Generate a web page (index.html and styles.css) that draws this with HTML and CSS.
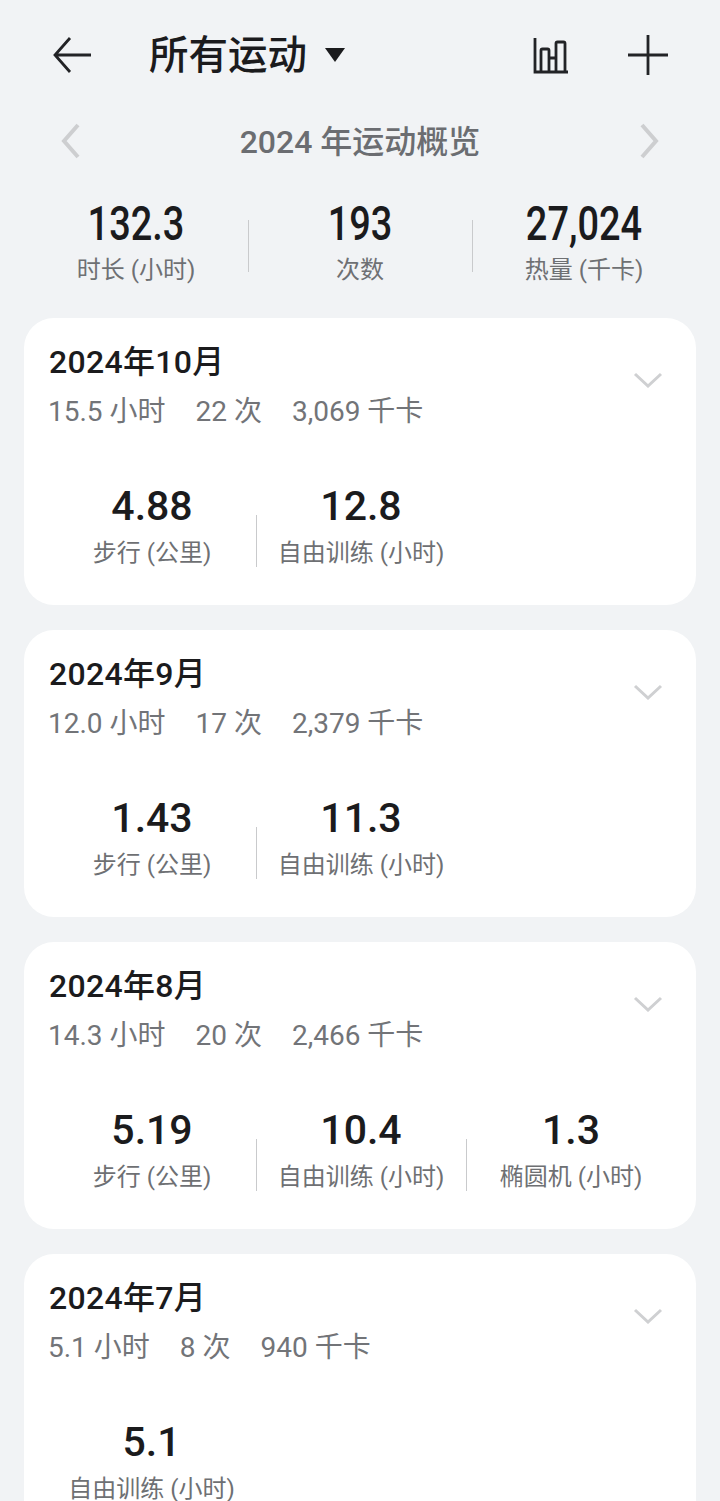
FILE: index.html
```html
<!DOCTYPE html>
<html lang="zh-CN">
<head>
<meta charset="utf-8">
<title>所有运动</title>
<link rel="stylesheet" href="styles.css">
</head>
<body>
<header class="topbar">
  <svg class="icon back" width="42" height="38" viewBox="0 0 42 38"><path d="M39 19H3M18 2 3 19l15 17"/></svg>
  <h1 class="title">所有运动</h1>
  <svg class="caret" width="22" height="16" viewBox="0 0 22 16"><path d="M1 1h20L11 15z"/></svg>
  <span class="spacer"></span>
  <svg class="icon chart" width="38" height="40" viewBox="0 0 38 40"><path d="M3 3v34h33M9 37V15.500q0-1.500 1.500-1.500h5q1.500 0 1.500 1.500V37M17 23h7M24 37V8.500Q24 7 25.500 7h6Q33 7 33 8.500V37"/></svg>
  <svg class="icon plus" width="40" height="40" viewBox="0 0 40 40"><path d="M20 0v40M0 20h40"/></svg>
</header>

<section class="year">
  <svg class="nav" width="20" height="36" viewBox="0 0 20 36"><path d="M18 2 4 18l14 16"/></svg>
  <h2 class="year-title">2024 年运动概览</h2>
  <svg class="nav" width="20" height="36" viewBox="0 0 20 36"><path d="M2 2l14 16L2 34"/></svg>
</section>

<section class="totals">
  <div class="total"><div class="total-num">132.3</div><div class="total-label">时长 (小时)</div></div>
  <div class="total total-sep"><div class="total-num">193</div><div class="total-label">次数</div></div>
  <div class="total total-sep"><div class="total-num">27,024</div><div class="total-label">热量 (千卡)</div></div>
</section>

<main class="cards">
  <article class="card">
    <svg class="chev" width="30" height="16" viewBox="0 0 30 16"><path d="M2 2l13 12L28 2"/></svg>
    <h3 class="month">2024年10月</h3>
    <p class="summary"><span>15.5 小时</span><span>22 次</span><span>3,069 千卡</span></p>
    <div class="metrics">
      <div class="metric"><div class="metric-num">4.88</div><div class="metric-label">步行 (公里)</div></div>
      <div class="metric metric-sep"><div class="metric-num">12.8</div><div class="metric-label">自由训练 (小时)</div></div>
    </div>
  </article>
  <article class="card">
    <svg class="chev" width="30" height="16" viewBox="0 0 30 16"><path d="M2 2l13 12L28 2"/></svg>
    <h3 class="month">2024年9月</h3>
    <p class="summary"><span>12.0 小时</span><span>17 次</span><span>2,379 千卡</span></p>
    <div class="metrics">
      <div class="metric"><div class="metric-num">1.43</div><div class="metric-label">步行 (公里)</div></div>
      <div class="metric metric-sep"><div class="metric-num">11.3</div><div class="metric-label">自由训练 (小时)</div></div>
    </div>
  </article>
  <article class="card">
    <svg class="chev" width="30" height="16" viewBox="0 0 30 16"><path d="M2 2l13 12L28 2"/></svg>
    <h3 class="month">2024年8月</h3>
    <p class="summary"><span>14.3 小时</span><span>20 次</span><span>2,466 千卡</span></p>
    <div class="metrics">
      <div class="metric"><div class="metric-num">5.19</div><div class="metric-label">步行 (公里)</div></div>
      <div class="metric metric-sep"><div class="metric-num">10.4</div><div class="metric-label">自由训练 (小时)</div></div>
      <div class="metric metric-sep"><div class="metric-num">1.3</div><div class="metric-label">椭圆机 (小时)</div></div>
    </div>
  </article>
  <article class="card">
    <svg class="chev" width="30" height="16" viewBox="0 0 30 16"><path d="M2 2l13 12L28 2"/></svg>
    <h3 class="month">2024年7月</h3>
    <p class="summary"><span>5.1 小时</span><span>8 次</span><span>940 千卡</span></p>
    <div class="metrics">
      <div class="metric metric-wide"><div class="metric-num">5.1</div><div class="metric-label">自由训练 (小时)</div></div>
    </div>
  </article>
</main>
</body>
</html>
```
FILE: styles.css
```css
* { box-sizing: border-box; }
html, body { margin: 0; padding: 0; }
body {
  width: 720px;
  height: 1501px;
  overflow: hidden;
  background: #f1f3f5;
  color: #1b1b1d;
  font-family: "Roboto", "Noto Sans CJK SC", sans-serif;
}
h1, h2, h3, p { margin: 0; font-weight: inherit; }
svg { display: block; flex: none; }

.topbar {
  display: flex;
  align-items: center;
  height: 110px;
  padding: 0 52px;
}
.icon path { fill: none; stroke: #222326; stroke-width: 2.8; }
.back { margin-right: 55px; }
.title { font-size: 39.5px; font-weight: 500; line-height: 50px; padding-top: 2px; }
.caret { margin-left: 17px; }
.caret path { fill: #1b1b1d; }
.spacer { flex: 1; }
.chart { margin-right: 58px; }

.year {
  display: flex;
  align-items: center;
  justify-content: space-between;
  height: 62px;
  padding: 0 60px;
}
.year-title { font-size: 32px; font-weight: 500; color: #6b6d71; line-height: 42px; padding-top: 2px; }
.nav path { fill: none; stroke: #cdced0; stroke-width: 4; }

.totals {
  display: flex;
  height: 146px;
  align-items: flex-start;
  padding: 24px 24px 0;
}
.total {
  flex: 1;
  position: relative;
  text-align: center;
}
.total-sep::before {
  content: "";
  position: absolute;
  left: 0;
  top: 24px;
  height: 52px;
  width: 1px;
  background: #c9cacc;
}
.total-num {
  font-size: 48px;
  font-weight: 500;
  line-height: 56px;
  transform: scaleX(0.79);
}
.total-label { font-size: 24px; line-height: 32px; color: #6e7073; margin-top: 2px; }

.cards { display: flex; flex-direction: column; gap: 25px; padding: 0 24px; }
.card {
  position: relative;
  height: 287px;
  background: #fff;
  border-radius: 30px;
  padding: 24px 24px 0;
}
.chev { position: absolute; right: 33px; top: 54px; }
.chev path { fill: none; stroke: #cfd0d2; stroke-width: 3; }
.month { font-size: 32px; font-weight: 500; line-height: 40px; letter-spacing: 0.3px; padding-left: 1px; }
.summary {
  display: flex;
  gap: 30px;
  font-size: 28px;
  line-height: 36px;
  color: #727478;
  margin-top: 12px;
}
.metrics { display: flex; margin-top: 52px; }
.metric { flex: none; width: 210px; position: relative; text-align: center; }
.metric:first-child { width: 208px; }
.metric-sep::before {
  content: "";
  position: absolute;
  left: 0;
  top: 33px;
  height: 52px;
  width: 1px;
  background: #c9cacc;
}
.metric:first-child.metric-wide { width: 207px; }
.metric-num { font-size: 41px; font-weight: 500; line-height: 48px; }
.metric-label { font-size: 24px; line-height: 32px; color: #6e7073; margin-top: 7px; }
```
